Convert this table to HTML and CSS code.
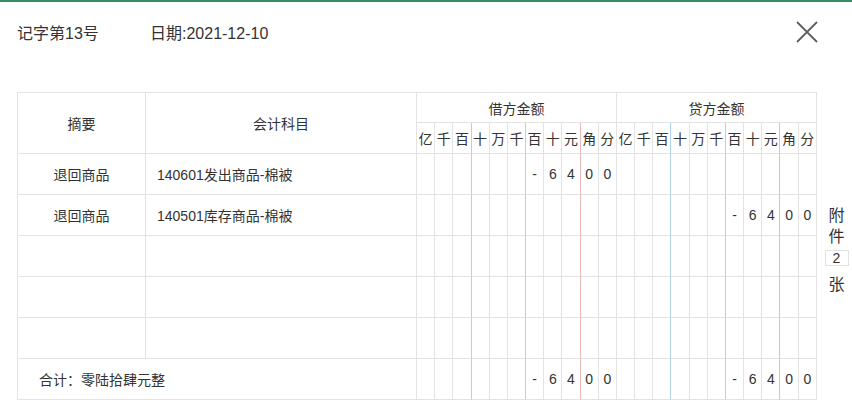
FILE: index.html
```html
<!DOCTYPE html>
<html lang="zh-CN">
<head>
<meta charset="utf-8">
<title>记账凭证</title>
<link rel="stylesheet" href="styles.css">
</head>
<body>
<div class="dialog">
  <div class="head">
    <span class="title">记字第13号</span>
    <span class="date">日期:2021-12-10</span>
    <span class="close" aria-label="关闭">
      <svg width="22" height="22" viewBox="0 0 22 22"><path d="M1 1 L21 21 M21 1 L1 21" stroke="#5f5f5f" stroke-width="1.8" fill="none"/></svg>
    </span>
  </div>
  <div class="main">
    <table class="voucher">
      <colgroup>
        <col class="c-sum"><col class="c-acct">
        <col><col><col><col><col><col><col><col><col><col><col>
        <col><col><col><col><col><col><col><col><col><col><col>
      </colgroup>
      <tr class="h1">
        <td rowspan="2" class="hd">摘要</td>
        <td rowspan="2" class="hd">会计科目</td>
        <td colspan="11" class="hd">借方金额</td>
        <td colspan="11" class="hd">贷方金额</td>
      </tr>
      <tr class="h2">
        <td class="d">亿</td><td class="d">千</td><td class="d b">百</td><td class="d">十</td><td class="d">万</td><td class="d b">千</td><td class="d">百</td><td class="d">十</td><td class="d r">元</td><td class="d">角</td><td class="d">分</td>
        <td class="d">亿</td><td class="d">千</td><td class="d b">百</td><td class="d">十</td><td class="d">万</td><td class="d b">千</td><td class="d">百</td><td class="d">十</td><td class="d r">元</td><td class="d">角</td><td class="d">分</td>
      </tr>
      <tr class="row">
        <td class="sum">退回商品</td><td class="acct">140601发出商品-棉被</td>
        <td class="d"></td><td class="d"></td><td class="d b"></td><td class="d"></td><td class="d"></td><td class="d b"></td><td class="d">-</td><td class="d">6</td><td class="d r">4</td><td class="d">0</td><td class="d">0</td>
        <td class="d"></td><td class="d"></td><td class="d b"></td><td class="d"></td><td class="d"></td><td class="d b"></td><td class="d"></td><td class="d"></td><td class="d r"></td><td class="d"></td><td class="d"></td>
      </tr>
      <tr class="row">
        <td class="sum">退回商品</td><td class="acct">140501库存商品-棉被</td>
        <td class="d"></td><td class="d"></td><td class="d b"></td><td class="d"></td><td class="d"></td><td class="d b"></td><td class="d"></td><td class="d"></td><td class="d r"></td><td class="d"></td><td class="d"></td>
        <td class="d"></td><td class="d"></td><td class="d b"></td><td class="d"></td><td class="d"></td><td class="d b"></td><td class="d">-</td><td class="d">6</td><td class="d r">4</td><td class="d">0</td><td class="d">0</td>
      </tr>
      <tr class="row">
        <td class="sum"></td><td class="acct"></td>
        <td class="d"></td><td class="d"></td><td class="d b"></td><td class="d"></td><td class="d"></td><td class="d b"></td><td class="d"></td><td class="d"></td><td class="d r"></td><td class="d"></td><td class="d"></td>
        <td class="d"></td><td class="d"></td><td class="d b"></td><td class="d"></td><td class="d"></td><td class="d b"></td><td class="d"></td><td class="d"></td><td class="d r"></td><td class="d"></td><td class="d"></td>
      </tr>
      <tr class="row">
        <td class="sum"></td><td class="acct"></td>
        <td class="d"></td><td class="d"></td><td class="d b"></td><td class="d"></td><td class="d"></td><td class="d b"></td><td class="d"></td><td class="d"></td><td class="d r"></td><td class="d"></td><td class="d"></td>
        <td class="d"></td><td class="d"></td><td class="d b"></td><td class="d"></td><td class="d"></td><td class="d b"></td><td class="d"></td><td class="d"></td><td class="d r"></td><td class="d"></td><td class="d"></td>
      </tr>
      <tr class="row">
        <td class="sum"></td><td class="acct"></td>
        <td class="d"></td><td class="d"></td><td class="d b"></td><td class="d"></td><td class="d"></td><td class="d b"></td><td class="d"></td><td class="d"></td><td class="d r"></td><td class="d"></td><td class="d"></td>
        <td class="d"></td><td class="d"></td><td class="d b"></td><td class="d"></td><td class="d"></td><td class="d b"></td><td class="d"></td><td class="d"></td><td class="d r"></td><td class="d"></td><td class="d"></td>
      </tr>
      <tr class="row">
        <td colspan="2" class="total">合计：零陆拾肆元整</td>
        <td class="d"></td><td class="d"></td><td class="d b"></td><td class="d"></td><td class="d"></td><td class="d b"></td><td class="d">-</td><td class="d">6</td><td class="d r">4</td><td class="d">0</td><td class="d">0</td>
        <td class="d"></td><td class="d"></td><td class="d b"></td><td class="d"></td><td class="d"></td><td class="d b"></td><td class="d">-</td><td class="d">6</td><td class="d r">4</td><td class="d">0</td><td class="d">0</td>
      </tr>
    </table>
    <div class="side">
      <span class="ch">附</span>
      <span class="ch">件</span>
      <span class="num">2</span>
      <span class="ch zhang">张</span>
    </div>
  </div>
</div>
</body>
</html>
```

FILE: styles.css
```css
* { box-sizing: border-box; }
html, body { margin: 0; padding: 0; background: #fff; }
body {
  font-family: "Liberation Sans", "Noto Sans CJK SC", sans-serif;
  color: #333;
  width: 852px;
  height: 415px;
  overflow: hidden;
}
.dialog {
  border-top: 2px solid #3b8c5e;
}
.head {
  display: flex;
  align-items: center;
  height: 60px;
  padding: 0 34px 0 17px;
  font-size: 16px;
}
.title { width: 133px; }
.date { }
.close {
  margin-left: auto;
  width: 22px;
  height: 22px;
  display: flex;
}
.main {
  display: flex;
  align-items: flex-start;
  margin-top: 30px;
  padding-left: 17px;
}
.voucher {
  width: 801px;
  table-layout: fixed;
  border-collapse: separate;
  border-spacing: 0;
  border-top: 1px solid #e3e3e3;
  border-left: 1px solid #e3e3e3;
  font-size: 14px;
}
.c-sum { width: 128px; }
.c-acct { width: 271px; }
.voucher td {
  padding: 0;
  border-right: 1px solid #e3e3e3;
  border-bottom: 1px solid #e3e3e3;
  white-space: nowrap;
  overflow: hidden;
}
.h1 td { height: 30px; }
.h2 td { height: 31px; }
.row td { height: 41px; }
.hd { text-align: center; }
.d { text-align: center; }
.voucher td.b { border-right-color: #b0d2ea; }
.voucher td.r { border-right-color: #ebb8b8; }
.sum { text-align: center; }
.acct { padding-left: 11px !important; }
.total { padding-left: 21px !important; }
.side {
  width: 35px;
  padding-left: 4px;
  padding-top: 113px;
  display: flex;
  flex-direction: column;
  align-items: center;
  font-size: 16px;
}
.ch { line-height: 21px; }
.num {
  margin-top: 3px;
  width: 24px;
  height: 16px;
  border: 1px solid #e3e3e3;
  font-size: 14px;
  line-height: 14px;
  text-align: center;
}
.zhang { margin-top: 8px; }
```
